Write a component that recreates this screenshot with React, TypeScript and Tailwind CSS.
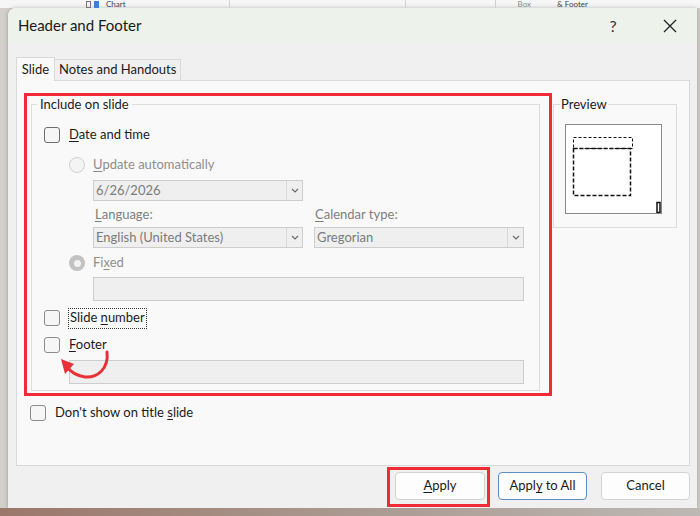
import React from "react";

const font = { fontFamily: "Lato, 'Noto Sans', sans-serif" };

function Checkbox({ dark }: { dark?: boolean }) {
  return (
    <div
      className={`w-4 h-4 shrink-0 rounded-[3px] border bg-[#f6f6f6] ${
        dark ? "border-[#6e6e6e]" : "border-[#8c8c8c]"
      }`}
    />
  );
}

function Radio({ checked }: { checked?: boolean }) {
  return checked ? (
    <div className="w-4 h-4 shrink-0 rounded-full bg-[#c2c2c2] flex items-center justify-center">
      <div className="w-[7px] h-[7px] rounded-full bg-[#f2f2f2]" />
    </div>
  ) : (
    <div className="w-4 h-4 shrink-0 rounded-full border border-[#cfcfcf] bg-[#f4f4f4]" />
  );
}

function Select({ value, width }: { value: string; width: string }) {
  return (
    <div className={`${width} h-[21px] flex border border-[#cdcdcd] bg-[#efefef]`}>
      <div className="flex-1 pl-[2px] flex items-center text-[13px] text-[#7b7b7b] leading-none">
        {value}
      </div>
      <div className="w-[16px] border-l border-[#d8d8d8] flex items-center justify-center">
        <svg width="8" height="5" viewBox="0 0 8 5">
          <path d="M1 1 L4 4 L7 1" fill="none" stroke="#6a6a6a" strokeWidth="1.2" />
        </svg>
      </div>
    </div>
  );
}

function U({ children }: { children: React.ReactNode }) {
  return <span className="underline underline-offset-2 decoration-1">{children}</span>;
}

export default function App() {
  return (
    <div className="w-[700px] h-[516px] bg-[#d3cfca] overflow-hidden text-[13px] text-[#1b1b1b]" style={font}>
      {/* app behind the dialog */}
      <div className="h-[8px] bg-[#f6f6f6] flex items-center text-[8px] text-[#444] leading-[8px] overflow-hidden">
        <div className="w-[86px]" />
        <div className="flex items-center gap-[3px]">
          <div className="w-[5px] h-[7px] border border-[#777]" />
          <div className="w-[5px] h-[7px] bg-[#3f7fd0]" />
          <span className="ml-[4px]">Chart</span>
        </div>
        <div className="w-[104px] self-stretch border-r border-[#cfcfcf]" />
        <div className="w-[176px] self-stretch border-r border-[#cfcfcf]" />
        <div className="w-[90px] self-stretch border-r border-[#cfcfcf]" />
        <div className="ml-[22px] text-[#8a8a8a]">Box</div>
        <div className="ml-[26px]">&amp; Footer</div>
      </div>

      <div className="ml-[8px] w-[689px] h-[500px] rounded-tl-[8px] overflow-hidden bg-[#f0f0f0] flex flex-col shadow-[0_0_4px_rgba(0,0,0,0.25)]">
        {/* title bar */}
        <div className="h-[35px] shrink-0 bg-[#edf2eb] flex items-center pl-[10px]">
          <div className="flex-1 text-[15px] text-[#1a1a1a]">Header and Footer</div>
          <div className="w-[30px] text-center text-[16px] text-[#333] mr-[27px]">?</div>
          <div className="w-[30px] flex justify-center mr-[12px]">
            <svg width="14" height="14" viewBox="0 0 14 14">
              <path d="M1 1 L13 13 M13 1 L1 13" stroke="#222" strokeWidth="1.3" />
            </svg>
          </div>
        </div>

        {/* body */}
        <div className="flex-1 flex flex-col pl-[8px] pr-[7px] pt-[14px]">
          <div className="flex items-end h-[23px]">
            <div className="h-[24px] w-[39px] -mb-px relative z-10 bg-[#f9f9f9] border border-b-0 border-[#d9d9d9] flex items-center justify-center text-[13px]">
              Slide
            </div>
            <div className="h-[21px] px-[4px] bg-[#f0f0f0] border border-b-0 border-l-0 border-[#d9d9d9] flex items-center text-[13px]">
              Notes and Handouts
            </div>
          </div>

          <div className="h-[386px] shrink-0 border border-[#d9d9d9] bg-[#f9f9f9] pt-[12px] pl-[7px] flex flex-col">
            <div className="flex items-start">
              {/* red annotation box around group */}
              <div className="relative w-[528px] border-[3px] border-[#ee2b36] pl-[4px] pr-[9px] pb-[2px]">
                <fieldset className="border border-[#dcdcdc] pb-[6px]">
                  <legend className="ml-[5px] px-[3px] leading-[16px] text-[13px]">Include on slide</legend>

                  <div className="mt-[13px] h-[20px] pl-[12px] flex items-center gap-[9px]">
                    <Checkbox dark />
                    <span>
                      <U>D</U>ate and time
                    </span>
                  </div>

                  <div className="mt-[10px] h-[20px] pl-[37px] flex items-center gap-[8px] text-[#8e8e8e]">
                    <Radio />
                    <span>
                      <U>U</U>pdate automatically
                    </span>
                  </div>

                  <div className="mt-[5px] ml-[61px]">
                    <Select value="6/26/2026" width="w-[210px]" />
                  </div>

                  <div className="mt-[5px] h-[18px] flex items-center text-[#7e7e7e]">
                    <div className="ml-[63px] w-[220px]">
                      <U>L</U>anguage:
                    </div>
                    <div>
                      <U>C</U>alendar type:
                    </div>
                  </div>

                  <div className="mt-[3px] ml-[61px] flex gap-[11px]">
                    <Select value="English (United States)" width="w-[210px]" />
                    <Select value="Gregorian" width="w-[210px]" />
                  </div>

                  <div className="mt-[5px] h-[20px] pl-[37px] flex items-center gap-[8px] text-[#8e8e8e]">
                    <Radio checked />
                    <span>
                      Fi<U>x</U>ed
                    </span>
                  </div>

                  <div className="mt-[4px] ml-[61px] w-[431px] h-[24px] border border-[#cdcdcd] bg-[#efefef]" />

                  <div className="mt-[7px] h-[20px] pl-[12px] flex items-center gap-[8px]">
                    <Checkbox />
                    <span className="border border-dotted border-[#333] px-[1px] h-[21px] flex items-center">
                      Slide&nbsp;<U>n</U>umber
                    </span>
                  </div>

                  <div className="mt-[7px] h-[20px] pl-[12px] flex items-center gap-[9px]">
                    <Checkbox />
                    <span>
                      <U>F</U>ooter
                    </span>
                  </div>

                  <div className="mt-[5px] ml-[37px] w-[455px] h-[24px] border border-[#cdcdcd] bg-[#efefef]" />
                </fieldset>

                {/* curved red arrow */}
                <svg className="absolute left-[30px] top-[251px]" width="60" height="40" viewBox="0 0 60 40">
                  <path
                    d="M50 5 C 52 22, 40 31, 28 30 C 20 29, 14 25, 10 20"
                    fill="none"
                    stroke="#e8303a"
                    strokeWidth="3"
                    strokeLinecap="round"
                  />
                  <polygon points="4,12 17,17 8,27" fill="#e8303a" />
                </svg>
              </div>

              {/* preview */}
              <fieldset className="ml-[1px] mt-[3px] w-[124px] h-[132px] border border-[#dcdcdc]">
                <legend className="ml-[6px] px-[1px] leading-[16px] text-[13px]">Preview</legend>
                <div className="mt-[12px] ml-[11px] w-[97px] h-[90px] border border-[#8a8a8a] bg-white">
                  <svg width="95" height="88" viewBox="0 0 95 88">
                    <rect x="7.5" y="12.5" width="59" height="11" fill="none" stroke="#111" strokeWidth="1" strokeDasharray="3 2" />
                    <rect x="7.5" y="23.5" width="57" height="47" fill="none" stroke="#111" strokeWidth="1.5" strokeDasharray="4 2" />
                    <rect x="91" y="77.5" width="3" height="10" fill="none" stroke="#111" strokeWidth="1.5" />
                  </svg>
                </div>
              </fieldset>
            </div>

            <div className="mt-[7px] h-[20px] ml-[6px] flex items-center gap-[9px]">
              <Checkbox />
              <span>
                Don't show on title <U>s</U>lide
              </span>
            </div>
          </div>

          {/* buttons */}
          <div className="flex justify-end items-start">
            <div className="mt-[1px] border-[3px] border-[#ee2b36] pl-[5px] pr-[2px] pt-[2px] pb-[4px]">
              <button className="w-[90px] h-[28px] rounded-[4px] border border-[#d3d3d3] bg-[#fdfdfd] text-[13px]">
                <U>A</U>pply
              </button>
            </div>
            <button className="ml-[8px] mt-[6px] w-[89px] h-[28px] rounded-[4px] border border-[#5b8fc4] bg-[#fdfdfd] text-[13px]">
              Appl<U>y</U> to All
            </button>
            <button className="ml-[14px] mt-[6px] w-[89px] h-[28px] rounded-[4px] border border-[#d3d3d3] bg-[#fdfdfd] text-[13px]">
              Cancel
            </button>
          </div>
        </div>
      </div>
      <div className="h-[8px] bg-gradient-to-r from-[#9b776a] via-[#a99990] to-[#bdb8b3]" />
    </div>
  );
}
